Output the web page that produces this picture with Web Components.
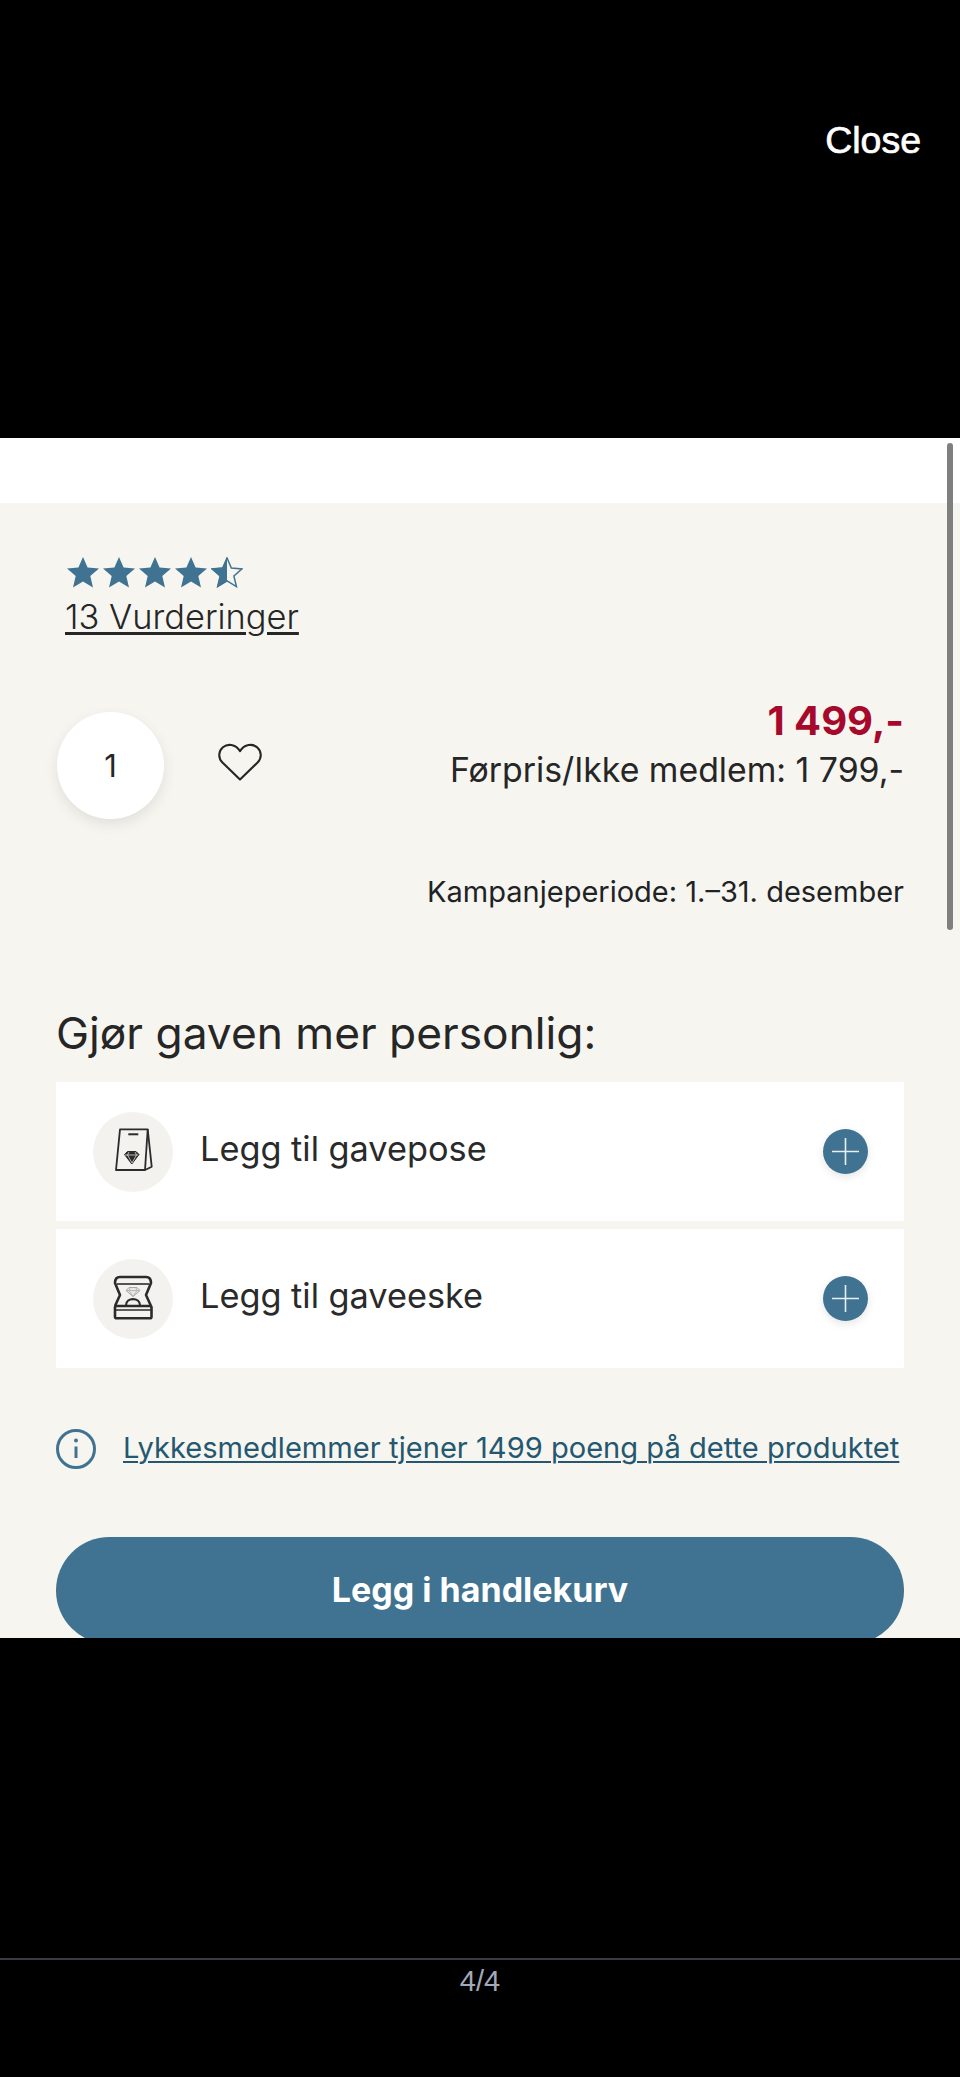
<!DOCTYPE html>
<html lang="no">
<head>
<meta charset="utf-8">
<title>Produkt</title>
<style>
  html, body { margin: 0; background: #000; }
  body { font-family: Inter, "Liberation Sans", sans-serif; color: #262626; }
</style>
</head>
<body>
<gallery-view>
  <product-sheet>
    <rating-block slot="rating" label="13 Vurderinger"></rating-block>
    <purchase-row slot="purchase" qty="1" price="1 499,-" before="Førpris/Ikke medlem: 1 799,-"></purchase-row>
    <campaign-note slot="campaign">Kampanjeperiode: 1.–31. desember</campaign-note>
    <gift-section slot="gifts" heading="Gjør gaven mer personlig:">
      <gift-row label="Legg til gavepose" icon="bag"></gift-row>
      <gift-row label="Legg til gaveeske" icon="box"></gift-row>
    </gift-section>
    <points-note slot="points">Lykkesmedlemmer tjener 1499 poeng på dette produktet</points-note>
    <cart-button slot="cart">Legg i handlekurv</cart-button>
  </product-sheet>
</gallery-view>

<script>
const BLUE = '#3f7391';

class GalleryView extends HTMLElement {
  constructor () {
    super();
    this.attachShadow({ mode: 'open' }).innerHTML = `
      <style>
        :host { display: flex; flex-direction: column; height: 2077px; background: #000; }
        .top { height: 438px; box-sizing: border-box; display: flex; justify-content: flex-end; padding: 119px 39px 0 0; }
        .close { font: 500 37.500px/42px "Liberation Sans", Arial, sans-serif; color: #fff; -webkit-text-stroke: .7px #fff; }
        .foot { flex: 1; display: flex; flex-direction: column; align-items: center; margin-top: 320px; border-top: 2px solid #3a3a42; }
        .count { margin-top: 5px; font: 400 29px/32px "Liberation Sans", Arial, sans-serif; color: #a3a9b8; }
      </style>
      <div class="top"><span class="close">Close</span></div>
      <slot></slot>
      <div class="foot"><span class="count">4/4</span></div>
    `;
  }
}

class ProductSheet extends HTMLElement {
  constructor () {
    super();
    this.attachShadow({ mode: 'open' }).innerHTML = `
      <style>
        :host { display: block; position: relative; height: 1200px; overflow: hidden; background: #f6f5f0; }
        .head { height: 65px; background: #fff; }
        .body { padding: 0 56px; display: flex; flex-direction: column; }
        .thumb { position: absolute; right: 7px; top: 5px; width: 6px; height: 487px; border-radius: 3px; background: #7f7f7f; }
      </style>
      <div class="head"></div>
      <div class="body">
        <slot name="rating"></slot>
        <slot name="purchase"></slot>
        <slot name="campaign"></slot>
        <slot name="gifts"></slot>
        <slot name="points"></slot>
        <slot name="cart"></slot>
      </div>
      <div class="thumb"></div>
    `;
  }
}

class RatingBlock extends HTMLElement {
  constructor () {
    super();
    const star = 'M16 0l4.6 10.6 11.4 1-8.7 7.5 2.7 11.3L16 24.4 6 30.4l2.7-11.3L0 11.600l11.4-1z';
    const full = `<svg width="32" height="31" viewBox="0 0 32 31"><path d="${star}" fill="${BLUE}"/></svg>`;
    const half = `<svg width="32" height="31" viewBox="0 0 32 31">
      <path d="${star}" fill="none" stroke="${BLUE}" stroke-width="1.6" transform="translate(1 1) scale(.94)"/>
      <path d="M16 0v24.400L6 30.400l2.700-11.300L0 11.600l11.400-1z" fill="${BLUE}"/></svg>`;
    this.attachShadow({ mode: 'open' }).innerHTML = `
      <style>
        :host { display: block; padding: 54px 0 0 9px; }
        .stars { display: flex; gap: 4px; padding-left: 2px; height: 31px; }
        a { display: inline-block; margin-top: 8px; font: 300 34.400px/42px Inter, sans-serif; color: #262626; text-decoration: underline; text-decoration-thickness: 2.500px; text-underline-offset: 3px; }
      </style>
      <div class="stars">${full.repeat(4)}${half}</div>
      <a>${this.getAttribute('label')}</a>
    `;
  }
}

class PurchaseRow extends HTMLElement {
  constructor () {
    super();
    this.attachShadow({ mode: 'open' }).innerHTML = `
      <style>
        :host { display: flex; align-items: flex-start; margin-top: 74px; height: 107px; }
        .qty { margin-left: 1px; width: 107px; height: 107px; border-radius: 50%; background: #fff; display: flex; align-items: center; justify-content: center; font: 400 31px/1 Inter, sans-serif; box-shadow: 0 5px 14px rgba(0,0,0,.09); }
        .heart { margin: 31px 0 0 54px; width: 44px; height: 38px; display: block; }
        .price { margin-left: auto; text-align: right; white-space: nowrap; }
        .now { font: 700 40px/50px Inter, sans-serif; color: #a6092b; margin-top: -16px; }
        .was { font: 400 33.800px/44px Inter, sans-serif; margin-top: 2px; }
      </style>
      <div class="qty">${this.getAttribute('qty')}</div>
      <svg class="heart" viewBox="0 0 46 40" fill="none" stroke="#262626" stroke-width="2.200" stroke-linejoin="round">
        <path d="M23 38.500L4.500 20.500C-.5 15.500 .5 8.500 5 4.500 10 .5 18 1 23 8.500 28 1 36 .5 41 4.500 45.500 8.500 46.500 15.500 41.500 20.500z"/>
      </svg>
      <div class="price">
        <div class="now">${this.getAttribute('price')}</div>
        <div class="was">${this.getAttribute('before')}</div>
      </div>
    `;
  }
}

class CampaignNote extends HTMLElement {
  constructor () {
    super();
    this.attachShadow({ mode: 'open' }).innerHTML = `
      <style>
        :host { display: block; margin-top: 54px; text-align: right; font: 400 29px/38px Inter, sans-serif; color: #1f2326; }
      </style>
      <slot></slot>
    `;
  }
}

class GiftSection extends HTMLElement {
  constructor () {
    super();
    this.attachShadow({ mode: 'open' }).innerHTML = `
      <style>
        :host { display: block; margin-top: 96px; }
        h2 { margin: 0 0 23px; font: 400 44.300px/52px Inter, sans-serif; color: #262626; }
        .list { display: flex; flex-direction: column; gap: 8px; }
      </style>
      <h2>${this.getAttribute('heading')}</h2>
      <div class="list"><slot></slot></div>
    `;
  }
}

const GIFT_ICONS = {
  bag: `<svg viewBox="0 0 80 80" width="80" height="80" fill="none" stroke="#2b2b2b" stroke-width="1.800" stroke-linejoin="round">
      <path d="M27 17.300H54.700L58.700 54.700 52 58H23z"/><path d="M54.700 17.300L52 58"/>
      <path d="M35.300 22.300H45.300" stroke-width="2"/>
      <path d="M31.500 42.500l3-3h8.500l3 3-7.200 9.500z" fill="#2b2b2b" stroke-width="1"/>
      <path d="M32 43h13M36 40l-1.500 3 4.500 8 4.500-8-1.500-3" stroke="#f4f2ee" stroke-width=".7"/>
    </svg>`,
  box: `<svg viewBox="0 0 80 80" width="80" height="80" fill="none" stroke="#2b2b2b" stroke-width="2.600" stroke-linejoin="round">
      <path d="M22 47l5-11-5-12c0-4 2-6 5-6h26c3 0 5 2 5 6l-5 12 5 11"/>
      <path d="M24 25H56" stroke-width="1.600"/>
      <rect x="22" y="47" width="36.500" height="12.300" rx="1.500"/>
      <path d="M22 51H58.500" stroke-width="1.700"/>
      <path d="M33 46.500c0-8.500 14-8.500 14 0" stroke-width="2.200"/>
      <path d="M33 31.500l3-3h8l3 3-7 6z" stroke="#a8a8a8" fill="#e6e6e4" stroke-width="1"/>
      <path d="M33.500 31.500h13M37 29l-1 2.500 4 6 4-6-1-2.500" stroke="#a8a8a8" stroke-width=".7"/>
    </svg>`
};

class GiftRow extends HTMLElement {
  constructor () {
    super();
    this.attachShadow({ mode: 'open' }).innerHTML = `
      <style>
        :host { display: flex; align-items: center; height: 139px; background: #fff; padding: 0 36px 0 37px; }
        .icon { width: 80px; height: 80px; border-radius: 50%; background: #f4f2ee; flex: none; }
        .icon svg { display: block; }
        .label { margin: -6px 0 0 27px; flex: 1; font: 400 34.300px/42px Inter, sans-serif; color: #2a2a2a; }
        .plus { width: 45px; height: 45px; border-radius: 50%; background: ${BLUE}; box-shadow: 0 3px 8px rgba(0,0,0,.1); flex: none; }
        .plus svg { display: block; }
      </style>
      <div class="icon">${GIFT_ICONS[this.getAttribute('icon')]}</div>
      <div class="label">${this.getAttribute('label')}</div>
      <div class="plus"><svg width="45" height="45" viewBox="0 0 45 45" stroke="#e8f0f4" stroke-width="1.600"><path d="M9 22.500H36M22.500 9V36"/></svg></div>
    `;
  }
}

class PointsNote extends HTMLElement {
  constructor () {
    super();
    this.attachShadow({ mode: 'open' }).innerHTML = `
      <style>
        :host { display: flex; align-items: center; gap: 27px; margin-top: 61px; height: 40px; }
        svg { flex: none; display: block; }
        a { margin-top: -2px; font: 400 29.100px/38px Inter, sans-serif; color: #245770; white-space: nowrap; text-decoration: underline; text-decoration-thickness: 2px; text-underline-offset: 3px; }
      </style>
      <svg width="40" height="40" viewBox="0 0 40 40" fill="none" stroke="${BLUE}" stroke-width="3">
        <circle cx="20" cy="20" r="18.500"/><path d="M20 17.500V29"/><circle cx="20" cy="11.500" r="2" fill="${BLUE}" stroke="none"/>
      </svg>
      <a><slot></slot></a>
    `;
  }
}

class CartButton extends HTMLElement {
  constructor () {
    super();
    this.attachShadow({ mode: 'open' }).innerHTML = `
      <style>
        :host { display: flex; align-items: center; justify-content: center; box-sizing: border-box; margin-top: 68px; padding-bottom: 2px; height: 107px; flex: none; border-radius: 54px; background: ${BLUE}; color: #fff; font: 700 34px/40px Inter, sans-serif; }
      </style>
      <slot></slot>
    `;
  }
}

customElements.define('gallery-view', GalleryView);
customElements.define('product-sheet', ProductSheet);
customElements.define('rating-block', RatingBlock);
customElements.define('purchase-row', PurchaseRow);
customElements.define('campaign-note', CampaignNote);
customElements.define('gift-section', GiftSection);
customElements.define('gift-row', GiftRow);
customElements.define('points-note', PointsNote);
customElements.define('cart-button', CartButton);
</script>
</body>
</html>
